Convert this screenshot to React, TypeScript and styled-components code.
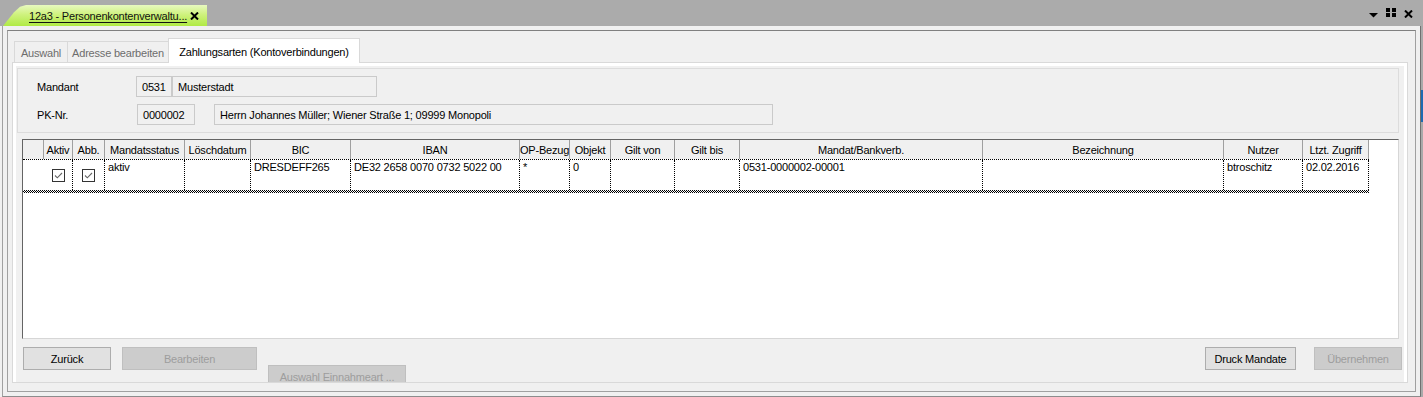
import React from "react";
import styled, { createGlobalStyle } from "styled-components";

const GlobalStyle = createGlobalStyle`
  html, body { margin: 0; padding: 0; }
  body {
    width: 1423px; height: 397px; overflow: hidden; background: #ababab;
    font-family: "Liberation Sans", Arial, sans-serif; font-size: 11px;
    letter-spacing: -0.2px; color: #000;
  }
  #root { width: 1423px; height: 397px; }
  * { box-sizing: border-box; }
`;

const COLS =
  "21px 29px 32px 80px 66px 100px 169px 50px 41px 64px 65px 243px 241px 79px 66px";

const Screen = styled.div`
  display: flex; flex-direction: column;
  width: 1423px; height: 397px; background: #ababab;
`;

const TopBar = styled.div`
  height: 26px; flex-shrink: 0; display: flex; align-items: flex-end;
  padding-left: 3px; padding-right: 10px;
`;

const DocTab = styled.div`
  width: 204px; height: 21px; padding-left: 26px;
  display: flex; align-items: center; gap: 3px;
  background: linear-gradient(#e8f9c0, #cff27e 45%, #b0ea44);
  clip-path: polygon(0 100%, 5px 70%, 11px 35%, 17px 8%, 23px 0, 100% 0, 100% 100%);
`;

const DocTitle = styled.span`
  text-decoration: underline; text-underline-offset: 2px; white-space: nowrap;
  color: #111; padding-top: 1px;
`;

const BarIcons = styled.div`
  margin-left: auto; align-self: flex-start; margin-top: 8px;
  display: flex; align-items: flex-start; gap: 8px;
`;

const IconBox = styled.div<{ $top: number }>`
  margin-top: ${(p) => p.$top}px; display: flex;
`;

const Body = styled.div`
  flex: 1; display: flex; min-height: 0; background: #f0f0f0;
`;

const Window = styled.div`
  width: 1419px; margin-left: 2px; flex-shrink: 0;
  background: #f0f0f0;
  border-left: 1px solid #a0a0a0; border-right: 1px solid #707070;
  border-bottom: 1px solid #8c8c8c;
  padding: 4px; display: flex;
`;

const SideStrip = styled.div`
  flex: 1; background: #a9a9a9; display: flex; flex-direction: column;
`;

const SideMark = styled.div`
  margin-top: 64px; height: 32px; background: #1d6ab2;
`;

const InnerFrame = styled.div`
  flex: 1; display: flex; flex-direction: column; min-height: 0;
  border: 1px solid #a0a0a0; border-top-color: #808080;
  padding: 7px 7px 8px 4px;
`;

const TabStrip = styled.div`
  height: 24px; flex-shrink: 0; display: flex; align-items: flex-end;
  padding-left: 2px;
`;

const Tab = styled.div<{ $w: number; $active?: boolean }>`
  width: ${(p) => p.$w}px;
  height: ${(p) => (p.$active ? 25 : 21)}px;
  margin-left: -1px;
  margin-bottom: ${(p) => (p.$active ? -1 : 0)}px;
  position: relative; z-index: ${(p) => (p.$active ? 2 : 1)};
  border: 1px solid #d9d9d9; border-bottom: none;
  background: ${(p) => (p.$active ? "#ffffff" : "#f0f0f0")};
  color: ${(p) => (p.$active ? "#000" : "#6d6d6d")};
  display: flex; align-items: center; justify-content: center;
  padding-top: 1px;
  white-space: nowrap;
  &:first-child { margin-left: 0; }
`;

const TabPage = styled.div`
  flex: 1; min-height: 0; display: flex;
  border: 1px solid #d9d9d9; background: #ffffff;
  padding: 3px 3px 0 3px; overflow: hidden;
`;

const PageBody = styled.div`
  flex: 1; min-height: 0; background: #f0f0f0; overflow: hidden;
  display: flex; flex-direction: column;
  padding: 2px 5px 0 1px;
`;

const HeadPanel = styled.div`
  height: 65px; flex-shrink: 0;
  border: 1px solid #dcdcdc; background: #f0f0f0;
  padding: 7px 0 7px 19px;
  display: flex; flex-direction: column; gap: 7px;
`;

const FieldRow = styled.div`
  height: 21px; display: flex; align-items: center;
`;

const FieldLabel = styled.div`
  width: 99px; flex-shrink: 0;
`;

const ReadBox = styled.div<{ $w: number; $ml?: number }>`
  width: ${(p) => p.$w}px; margin-left: ${(p) => p.$ml ?? 0}px;
  height: 21px; flex-shrink: 0;
  border: 1px solid #cacaca; background: #f0f0f0;
  padding-left: 5px; display: flex; align-items: center;
  white-space: nowrap; overflow: hidden;
`;

const Grid = styled.div`
  margin-top: 6px; margin-left: 5px; height: 200px; flex-shrink: 0;
  background: #ffffff; overflow: hidden;
  border-top: 1px solid #646464; border-left: 1px solid #646464;
  border-right: 1px solid #d6d6d6; border-bottom: 1px solid #d6d6d6;
`;

const GridHead = styled.div`
  display: grid; grid-template-columns: ${COLS};
  width: 1346px; height: 19px; background: #f0f0f0;
`;

const HeadCell = styled.div`
  border-right: 1px solid #a0a0a0;
  display: flex; align-items: center; justify-content: center;
  white-space: nowrap; overflow: hidden;
`;

const DataRow = styled.div`
  display: grid; grid-template-columns: ${COLS};
  width: 1346px; height: 31px; border-top: 1px dotted #000;
`;

const DataCell = styled.div<{ $plain?: boolean; $box?: boolean }>`
  border-right: ${(p) => (p.$plain ? "none" : "1px dotted #000")};
  padding: ${(p) => (p.$box ? "0" : "1px 2px 0 3px")};
  line-height: 13px; white-space: nowrap; overflow: hidden;
  display: flex;
  align-items: ${(p) => (p.$box ? "center" : "flex-start")};
  justify-content: ${(p) => (p.$box ? "center" : "flex-start")};
`;

const RowFocusEnd = styled.div`
  width: 1346px; height: 3px;
  background: repeating-conic-gradient(#000 0 25%, #fff 0 50%) 0 0 / 2px 2px;
`;

const ButtonRow = styled.div`
  margin-top: 8px; display: flex; align-items: flex-start; flex-shrink: 0;
  margin-right: -3px;
`;

const Button = styled.div<{ $w: number; $ml?: number; $mt?: number; $disabled?: boolean }>`
  width: ${(p) => p.$w}px; height: 23px; flex-shrink: 0;
  margin-left: ${(p) => p.$ml ?? 0}px; margin-top: ${(p) => p.$mt ?? 0}px;
  border: 1px solid ${(p) => (p.$disabled ? "#bfbfbf" : "#adadad")};
  background: ${(p) => (p.$disabled ? "#cccccc" : "#e1e1e1")};
  color: ${(p) => (p.$disabled ? "#9d9d9d" : "#000")};
  display: flex; align-items: center; justify-content: center;
  white-space: nowrap;
`;

const Spacer = styled.div`flex: 1;`;

const BoldX = () => (
  <svg width="9" height="8" viewBox="0 0 9 8">
    <path d="M1 0.5 L8 7.5 M8 0.5 L1 7.5" stroke="#000" strokeWidth="2" />
  </svg>
);

const DownTriangle = () => (
  <svg width="9" height="5" viewBox="0 0 9 5">
    <polygon points="0,0 9,0 4.5,4.6" fill="#000" />
  </svg>
);

const TileIcon = () => (
  <svg width="10" height="9" viewBox="0 0 10 9">
    <rect x="0" y="0" width="4" height="4" fill="#000" />
    <rect x="6" y="0" width="4" height="4" fill="#000" />
    <rect x="0" y="5" width="4" height="4" fill="#000" />
    <rect x="6" y="5" width="4" height="4" fill="#000" />
  </svg>
);

const CheckBox = () => (
  <svg width="13" height="13" viewBox="0 0 13 13">
    <rect x="0.5" y="0.5" width="12" height="12" fill="#fff" stroke="#333" />
    <path d="M3 6.5 L5.3 8.8 L10 4" fill="none" stroke="#666" strokeWidth="1.1" />
  </svg>
);

const headers = [
  "", "Aktiv", "Abb.", "Mandatsstatus", "Löschdatum", "BIC", "IBAN", "OP-Bezug",
  "Objekt", "Gilt von", "Gilt bis", "Mandat/Bankverb.", "Bezeichnung", "Nutzer",
  "Ltzt. Zugriff",
];

type Cell = { text?: string; check?: boolean };

const row: Cell[] = [
  {}, { check: true }, { check: true }, { text: "aktiv" }, { text: "" },
  { text: "DRESDEFF265" }, { text: "DE32 2658 0070 0732 5022 00" }, { text: "*" },
  { text: "0" }, { text: "" }, { text: "" }, { text: "0531-0000002-00001" },
  { text: "" }, { text: "btroschitz" }, { text: "02.02.2016" },
];

export default function App() {
  return (
    <>
      <GlobalStyle />
      <Screen>
        <TopBar>
          <DocTab>
            <DocTitle>12a3 - Personenkontenverwaltu...</DocTitle>
            <BoldX />
          </DocTab>
          <BarIcons>
            <IconBox $top={5}><DownTriangle /></IconBox>
            <IconBox $top={0}><TileIcon /></IconBox>
            <IconBox $top={2}><BoldX /></IconBox>
          </BarIcons>
        </TopBar>
        <Body>
          <Window>
            <InnerFrame>
              <TabStrip>
                <Tab $w={54}>Auswahl</Tab>
                <Tab $w={102}>Adresse bearbeiten</Tab>
                <Tab $w={192} $active>Zahlungsarten (Kontoverbindungen)</Tab>
              </TabStrip>
              <TabPage>
                <PageBody>
                  <HeadPanel>
                    <FieldRow>
                      <FieldLabel>Mandant</FieldLabel>
                      <ReadBox $w={36}>0531</ReadBox>
                      <ReadBox $w={205}>Musterstadt</ReadBox>
                    </FieldRow>
                    <FieldRow>
                      <FieldLabel>PK-Nr.</FieldLabel>
                      <ReadBox $w={58} $ml={1}>0000002</ReadBox>
                      <ReadBox $w={559} $ml={19}>
                        Herrn Johannes Müller; Wiener Straße 1; 09999 Monopoli
                      </ReadBox>
                    </FieldRow>
                  </HeadPanel>
                  <Grid>
                    <GridHead>
                      {headers.map((h, i) => (
                        <HeadCell key={i}>{h}</HeadCell>
                      ))}
                    </GridHead>
                    <DataRow>
                      {row.map((c, i) =>
                        c.check ? (
                          <DataCell key={i} $box>
                            <CheckBox />
                          </DataCell>
                        ) : (
                          <DataCell key={i} $plain={i === 0}>
                            {c.text}
                          </DataCell>
                        )
                      )}
                    </DataRow>
                    <RowFocusEnd />
                  </Grid>
                  <ButtonRow>
                    <Button $w={88} $ml={6}>Zurück</Button>
                    <Button $w={135} $ml={11} $disabled>Bearbeiten</Button>
                    <Button $w={138} $ml={11} $mt={18} $disabled>Auswahl Einnahmeart ...</Button>
                    <Spacer />
                    <Button $w={91}>Druck Mandate</Button>
                    <Button $w={88} $ml={18} $disabled>Übernehmen</Button>
                  </ButtonRow>
                </PageBody>
              </TabPage>
            </InnerFrame>
          </Window>
          <SideStrip>
            <SideMark />
          </SideStrip>
        </Body>
      </Screen>
    </>
  );
}
